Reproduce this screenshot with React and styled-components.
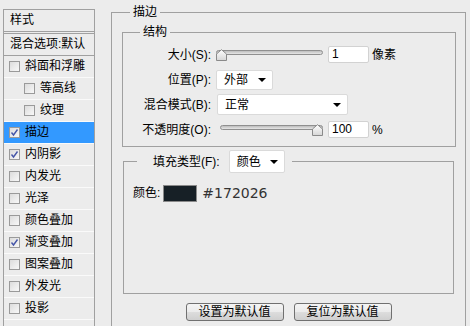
import React from 'react'
import styled, { createGlobalStyle } from 'styled-components'

const GlobalStyle = createGlobalStyle`
  html, body {
    margin: 0;
    background: #ececec;
    overflow: hidden;
    font-family: "Liberation Sans", "Noto Sans CJK SC", sans-serif;
    font-size: 12px;
    color: #000;
  }
`

const styles = [
    { name: '斜面和浮雕' },
    { name: '等高线', sub: true },
    { name: '纹理', sub: true },
    { name: '描边', checked: true, active: true },
    { name: '内阴影', checked: true },
    { name: '内发光' },
    { name: '光泽' },
    { name: '颜色叠加' },
    { name: '渐变叠加', checked: true },
    { name: '图案叠加' },
    { name: '外发光' },
    { name: '投影' },
]

const Check = ({ checked }) => (
    <Box>
        {checked && (
            <svg width="9" height="9" viewBox="0 0 9 9">
                <polyline points="1.5,4.5 3.5,7 7.5,1.5" fill="none" stroke="#4656a8" strokeWidth="1.4" />
            </svg>
        )}
    </Box>
)

const Slider = ({ value, inset = 0 }) => (
    <SliderWrap>
        <Track $inset={inset} />
        <Thumb width="11" height="12" viewBox="0 0 11 12" style={{ left: `calc(${value}% - ${value * 0.11}px)` }}>
            <defs>
                <linearGradient id="thumbFill" x1="0" y1="0" x2="0" y2="1">
                    <stop offset="0" stopColor="#ffffff" />
                    <stop offset="1" stopColor="#d6d6d6" />
                </linearGradient>
            </defs>
            <path d="M0.5 11.5 V5 L5.5 0.7 L10.5 5 V11.5 Z" fill="url(#thumbFill)" stroke="#8a8a8a" />
        </Thumb>
    </SliderWrap>
)

const App = () => {
    return (
        <Page>
            <GlobalStyle />
            <Sidebar>
                <SideHeader>样式</SideHeader>
                <BlendRow>混合选项:默认</BlendRow>
                {styles.map((s) => (
                    <StyleRow key={s.name} $sub={s.sub} $active={s.active}>
                        <Check checked={s.checked} />
                        <span>{s.name}</span>
                    </StyleRow>
                ))}
            </Sidebar>

            <Outer>
                <Legend $offset={18}>描边</Legend>

                <Structure>
                    <Legend $offset={17}>结构</Legend>
                    <FormGrid>
                        <Label>大小(S):</Label>
                        <Control>
                            <Slider value={0} />
                            <Field>1</Field>
                            <Unit>像素</Unit>
                        </Control>

                        <Label>位置(P):</Label>
                        <Control>
                            <Select $w={57} $h={20}>外部<Arrow /></Select>
                        </Control>

                        <Label>混合模式(B):</Label>
                        <Control>
                            <Select $w={131} $h={21} $shift={1}>正常<Arrow /></Select>
                        </Control>

                        <Label>不透明度(O):</Label>
                        <Control>
                            <Slider value={100} inset={4} />
                            <Field>100</Field>
                            <Unit>%</Unit>
                        </Control>
                    </FormGrid>
                </Structure>

                <Fill>
                    <FillLegend>
                        <span>填充类型(F):</span>
                        <Select $w={56} $h={23}>颜色<Arrow /></Select>
                    </FillLegend>
                    <FillBody>
                        <ColorRow>
                            <span>颜色:</span>
                            <Swatch $color="#172026" />
                            <Hex>#172026</Hex>
                        </ColorRow>
                    </FillBody>
                </Fill>

                <Buttons>
                    <Button type="button">设置为默认值</Button>
                    <Button type="button">复位为默认值</Button>
                </Buttons>
            </Outer>
        </Page>
    )
}

export default App

const Page = styled.div`
  display: flex;
  align-items: flex-start;
`

const Sidebar = styled.aside`
  flex-shrink: 0;
  box-sizing: border-box;
  margin: 9px 0 0 3px;
  width: 92px;
  height: 340px;
  border: 1px solid #a0a0a0;
  border-bottom: none;
`

const SideHeader = styled.div`
  height: 21px;
  line-height: 21px;
  padding-left: 6px;
  border-bottom: 3px double #a0a0a0;
`

const BlendRow = styled.div`
  height: 21px;
  line-height: 21px;
  padding-left: 6px;
  border-bottom: 1px solid #a0a0a0;
`

const StyleRow = styled.div`
  display: flex;
  align-items: center;
  gap: 5px;
  height: 21px;
  padding-left: ${p => (p.$sub ? 20 : 5)}px;
  border-bottom: 1px solid #fafafa;
  background: ${p => (p.$active ? '#3399ff' : 'transparent')};
  line-height: 21px;
`

const Box = styled.span`
  box-sizing: border-box;
  display: flex;
  align-items: center;
  justify-content: center;
  width: 11px;
  height: 11px;
  border: 1px solid #9a9a9a;
  background: linear-gradient(135deg, #dcdcdc, #f8f8f8);
`

const Outer = styled.fieldset`
  box-sizing: border-box;
  flex-shrink: 0;
  margin: 4px 0 0 16px;
  padding: 0;
  min-width: 0;
  width: 355px;
  height: 400px;
  border: 1px solid #a0a0a0;
`

const Legend = styled.legend`
  margin-left: ${p => p.$offset}px;
  padding: 0 3px;
  line-height: 16px;
`

const Structure = styled.fieldset`
  box-sizing: border-box;
  margin: 4px 0 0 10px;
  padding: 2px 0 4px 0;
  min-width: 0;
  width: 334px;
  border: 1px solid #a0a0a0;
`

const FormGrid = styled.div`
  display: grid;
  grid-template-columns: 88px 1fr;
  grid-auto-rows: 25px;
  column-gap: 5px;
  align-items: center;
`

const Label = styled.span`
  text-align: right;
  line-height: 16px;
  white-space: nowrap;
`

const Control = styled.div`
  display: flex;
  align-items: center;
`

const SliderWrap = styled.div`
  position: relative;
  width: 107px;
  height: 12px;
  margin-right: 5px;
`

const Track = styled.div`
  box-sizing: border-box;
  height: 5px;
  margin: 1px 0 0 ${p => p.$inset}px;
  border: 1px solid #8f8f8f;
  border-radius: 3px;
  background: linear-gradient(#bdbdbd, #e6e6e6);
`

const Thumb = styled.svg`
  position: absolute;
  top: 0;
`

const Field = styled.div`
  box-sizing: border-box;
  width: 41px;
  height: 17px;
  padding-left: 3px;
  line-height: 15px;
  background: #fff;
  border: 1px solid #d2d2d2;
  border-radius: 2px;
`

const Unit = styled.span`
  margin-left: 3px;
  line-height: 16px;
`

const Select = styled.div`
  box-sizing: border-box;
  display: flex;
  align-items: center;
  justify-content: space-between;
  width: ${p => p.$w}px;
  height: ${p => p.$h}px;
  margin-left: ${p => p.$shift || 0}px;
  padding: 0 6px 0 7px;
  background: #fff;
  border: 1px solid #dadada;
  border-radius: 2px;
  line-height: 16px;
`

const Arrow = styled.span`
  width: 0;
  height: 0;
  border-left: 4px solid transparent;
  border-right: 4px solid transparent;
  border-top: 4px solid #000;
`

const Fill = styled.fieldset`
  box-sizing: border-box;
  margin: 3px 0 0 11px;
  padding: 0;
  min-width: 0;
  width: 331px;
  border: 1px solid #a0a0a0;
`

const FillLegend = styled.legend`
  display: flex;
  align-items: center;
  gap: 9px;
  margin-left: 13px;
  padding: 0 7px 0 16px;
  line-height: 16px;
`

const FillBody = styled.div`
  height: 120px;
  padding: 12px 0 0 9px;
  box-sizing: border-box;
`

const ColorRow = styled.div`
  display: flex;
  align-items: center;
  gap: 3px;
  line-height: 17px;
`

const Swatch = styled.span`
  box-sizing: border-box;
  width: 34px;
  height: 17px;
  border: 1px solid #8a8a8a;
  background: ${p => p.$color};
`

const Hex = styled.span`
  margin-left: 2px;
  font-family: "DejaVu Sans", sans-serif;
  font-size: 14px;
  color: #333;
`

const Buttons = styled.div`
  display: flex;
  justify-content: center;
  gap: 10px;
  margin-top: 9px;
`

const Button = styled.button`
  box-sizing: border-box;
  width: 98px;
  height: 18px;
  padding: 0;
  font-family: "Liberation Sans", "Noto Sans CJK SC", sans-serif;
  font-size: 12px;
  line-height: 16px;
  color: #000;
  border: 1px solid #707070;
  border-radius: 3px;
  background: linear-gradient(#f4f4f4, #ebebeb 50%, #dddddd 50%, #cfcfcf);
`
